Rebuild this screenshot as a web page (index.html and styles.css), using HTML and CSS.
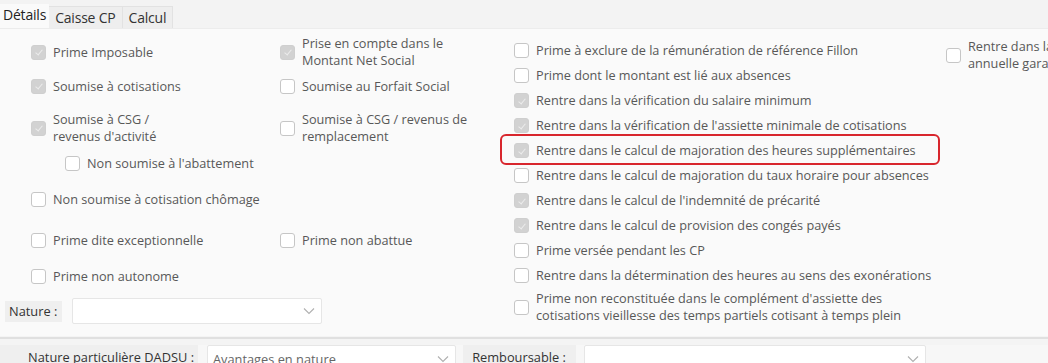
FILE: index.html
```html
<!DOCTYPE html>
<html lang="fr">
<head>
<meta charset="utf-8">
<link rel="stylesheet" href="styles.css">
</head>
<body>
<div class="tabs">
  <div class="tab active">Détails</div>
  <div class="tab">Caisse CP</div>
  <div class="tab">Calcul</div>
</div>
<div class="panel">
  <div class="left">
    <div class="grid12">
      <div class="cell r1"><span class="cb on"></span><span class="lbl">Prime Imposable</span></div>
      <div class="cell r1"><span class="cb on"></span><span class="lbl">Prise en compte dans le<br>Montant Net Social</span></div>
      <div class="cell r2"><span class="cb on"></span><span class="lbl">Soumise à cotisations</span></div>
      <div class="cell r2"><span class="cb"></span><span class="lbl">Soumise au Forfait Social</span></div>
      <div class="cell r3"><span class="cb on"></span><span class="lbl">Soumise à CSG /<br>revenus d'activité</span></div>
      <div class="cell r3"><span class="cb"></span><span class="lbl">Soumise à CSG / revenus de<br>remplacement</span></div>
      <div class="cell r4 indent"><span class="cb"></span><span class="lbl">Non soumise à l'abattement</span></div>
      <div class="cell r4"></div>
      <div class="cell r5"><span class="cb"></span><span class="lbl">Non soumise à cotisation chômage</span></div>
      <div class="cell r5"></div>
      <div class="cell r6"><span class="cb"></span><span class="lbl">Prime dite exceptionnelle</span></div>
      <div class="cell r6"><span class="cb"></span><span class="lbl">Prime non abattue</span></div>
      <div class="cell r7"><span class="cb"></span><span class="lbl">Prime non autonome</span></div>
      <div class="cell r7"></div>
    </div>
    <div class="nature">
      <span class="tag">Nature :</span>
      <div class="combo nat"><span class="val"></span><svg class="chev" viewBox="0 0 12 8" width="12" height="8"><path d="M1 1.5 L6 6.5 L11 1.5" fill="none" stroke="#b0b0b0" stroke-width="1.1"/></svg></div>
    </div>
  </div>
  <div class="col3">
    <div class="row"><span class="cb"></span><span class="lbl">Prime à exclure de la rémunération de référence Fillon</span></div>
    <div class="row"><span class="cb"></span><span class="lbl">Prime dont le montant est lié aux absences</span></div>
    <div class="row"><span class="cb on"></span><span class="lbl">Rentre dans la vérification du salaire minimum</span></div>
    <div class="row"><span class="cb on"></span><span class="lbl">Rentre dans la vérification de l'assiette minimale de cotisations</span></div>
    <div class="row hl"><span class="cb on"></span><span class="lbl">Rentre dans le calcul de majoration des heures supplémentaires</span><span class="redbox"></span></div>
    <div class="row"><span class="cb"></span><span class="lbl">Rentre dans le calcul de majoration du taux horaire pour absences</span></div>
    <div class="row"><span class="cb on"></span><span class="lbl">Rentre dans le calcul de l'indemnité de précarité</span></div>
    <div class="row"><span class="cb on"></span><span class="lbl">Rentre dans le calcul de provision des congés payés</span></div>
    <div class="row"><span class="cb"></span><span class="lbl">Prime versée pendant les CP</span></div>
    <div class="row"><span class="cb"></span><span class="lbl">Rentre dans la détermination des heures au sens des exonérations</span></div>
    <div class="row two"><span class="cb"></span><span class="lbl">Prime non reconstituée dans le complément d'assiette des<br>cotisations vieillesse des temps partiels cotisant à temps plein</span></div>
  </div>
  <div class="col4">
    <div class="row two"><span class="cb"></span><span class="lbl">Rentre dans la période<br>annuelle garantie</span></div>
  </div>
</div>
<div class="sep"></div>
<div class="bottom">
  <span class="tag wide">Nature particulière DADSU :</span>
  <div class="combo dadsu"><span class="val">Avantages en nature</span><svg class="chev" viewBox="0 0 12 8" width="12" height="8"><path d="M1 1.5 L6 6.5 L11 1.5" fill="none" stroke="#b0b0b0" stroke-width="1.1"/></svg></div>
  <span class="tag remb">Remboursable :</span>
  <div class="combo rcombo"><span class="val"></span><svg class="chev" viewBox="0 0 12 8" width="12" height="8"><path d="M1 1.5 L6 6.5 L11 1.5" fill="none" stroke="#b0b0b0" stroke-width="1.1"/></svg></div>
</div>
</body>
</html>
```
FILE: styles.css
```css
html, body {
  margin: 0;
  padding: 0;
  background: #f4f4f4;
  width: 1048px;
  height: 363px;
  overflow: hidden;
  font-family: "Open Sans", "Noto Sans", sans-serif;
  font-size: 12.7px;
  color: #585858;
}
.tabs {
  display: flex;
  height: 28px;
  align-items: flex-end;
  background: #f3f3f3;
}
.tab {
  height: 22px;
  line-height: 21px;
  padding: 0 6px;
  background: #eeeeee;
  border: 1px solid #e2e2e2;
  border-bottom: none;
  border-left: none;
  color: #333;
  font-size: 14px;
  letter-spacing: -0.2px;
  box-sizing: border-box;
}
.tab.active {
  height: 24px;
  background: #fafafa;
  border: none;
  padding: 0 3px 0 3px;
  color: #222;
}
.panel {
  display: flex;
  background: #fafafa;
  height: 308px;
  border-top: 1px solid #ececec;
  box-sizing: border-box;
}
.left {
  width: 514px;
  padding-left: 5px;
  box-sizing: border-box;
  display: flex;
  flex-direction: column;
}
.grid12 {
  display: grid;
  grid-template-columns: 249px 234px;
  grid-template-rows: 32px 36px 48px 22px 50px 32px 40px;
  margin-left: 26px;
  margin-top: 7px;
}
.cell {
  display: flex;
  align-items: center;
}
.cell.indent { padding-left: 34px; }
.lbl {
  line-height: 17px;
  white-space: nowrap;
}
.cb {
  flex: none;
  width: 15px;
  height: 15px;
  box-sizing: border-box;
  border: 1px solid #c6c6c6;
  border-radius: 3px;
  background: #fff;
  margin-right: 7px;
  position: relative;
}
.cb.on {
  background: #d2d2d2;
  border-color: #cfcfcf;
}
.cb.on::after {
  content: "";
  position: absolute;
  left: 4.5px;
  top: 2.5px;
  width: 3px;
  height: 6px;
  border-right: 1px solid #ececec;
  border-bottom: 1px solid #ececec;
  transform: rotate(40deg);
}
.nature {
  display: flex;
  align-items: center;
  margin-top: 2px;
}
.tag {
  background: #efefef;
  color: #333;
  font-size: 12.8px;
  height: 21px;
  line-height: 21px;
  padding: 0 5px 0 4px;
}
.combo {
  background: #fff;
  border: 1px solid #e6e6e6;
  border-radius: 2px;
  height: 26px;
  box-sizing: border-box;
  display: flex;
  align-items: center;
  justify-content: space-between;
  padding: 0 6px 0 5px;
}
.combo .val { color: #666; font-size: 12.8px; }
.combo.nat { width: 250px; margin-left: 10px; }
.col3 {
  width: 432px;
  padding-top: 9px;
  display: flex;
  flex-direction: column;
}
.row {
  display: flex;
  align-items: center;
  height: 25px;
  position: relative;
}
.row.two { height: 36px; margin-top: 1px; }
.redbox {
  position: absolute;
  left: -14px;
  top: -4px;
  width: 440px;
  height: 31px;
  border: 2px solid #d8262d;
  border-radius: 6px;
  box-sizing: border-box;
}
.col4 {
  flex: 1;
  padding-top: 9px;
  overflow: hidden;
}
.col4 .row.two { margin-top: 0; height: 34px; }
.sep {
  height: 2px;
  background: #e0e0e0;
  margin-top: 1px;
}
.bottom {
  display: flex;
  align-items: flex-start;
  margin-top: 6px;
  background: #f7f7f7;
  height: 30px;
}
.tag.wide { width: 198px; box-sizing: border-box; text-align: right; padding-right: 4px; height: 24px; line-height: 24px; }
.combo.dadsu { width: 249px; margin-left: 9px; height: 28px; }
.tag.remb { width: 113px; margin-left: 7px; box-sizing: border-box; text-align: center; height: 24px; line-height: 24px; }
.combo.rcombo { width: 342px; margin-left: 8px; height: 28px; }
```
